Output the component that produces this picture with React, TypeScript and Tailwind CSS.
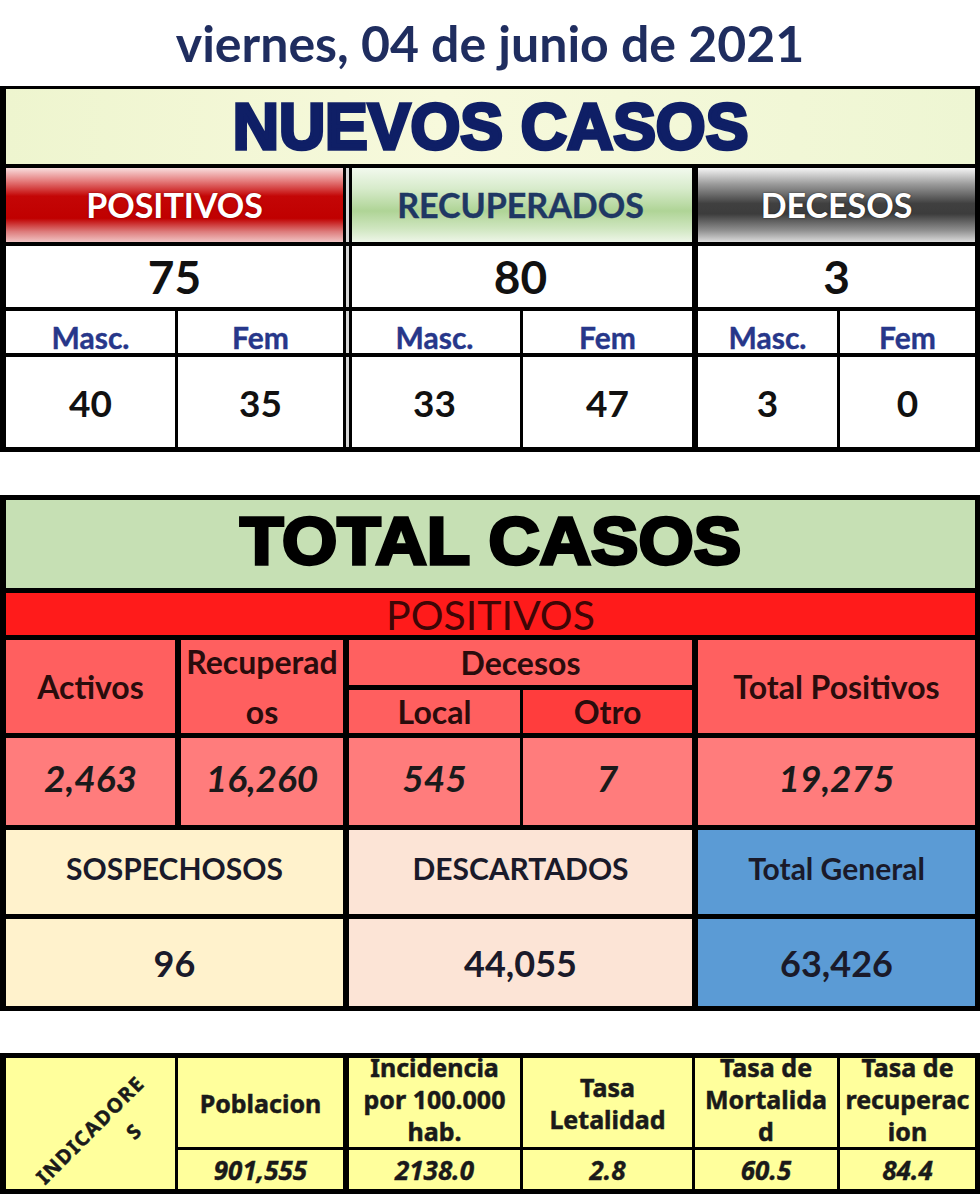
import React from "react";

const COLS = "grid-cols-[169px_165px_174px_169px_142px_135px]";
const SEP_DOUBLE = "border-l-[3px] border-l-[#d6d6d6] shadow-[inset_3px_0_0_#000]";
const SEP_THICK = "border-l-[3px] border-l-black";
const CENTER = "flex items-center justify-center text-center";

function Nuevos() {
  const num = "text-[46px] font-bold leading-none text-[#111]";
  const sub = "text-[30px] font-bold leading-none text-[#27378a] [-webkit-text-stroke:0.4px_#27378a]";
  const val = "text-[37px] font-bold leading-none text-[#111]";
  return (
    <div
      className={`grid bg-black pl-[6px] pr-[5px] pt-[3px] pb-[5px] ${COLS} grid-rows-[75px_74px_61px_42px_90px] gap-x-[3px] gap-y-[4px]`}
    >
      <div className={`col-span-6 ${CENTER} bg-[linear-gradient(90deg,#eef5cf_0%,#f7f9dc_45%,#eef6d3_100%)]`}>
        <span className="inline-block scale-y-[1.02] font-['Liberation_Sans',sans-serif] text-[64px] font-bold leading-none text-[#0f1f66] [-webkit-text-stroke:3.5px_#0f1f66]">
          NUEVOS CASOS
        </span>
      </div>

      <div className={`col-span-2 ${CENTER} bg-[linear-gradient(180deg,#f8dddd_0%,#e47a7a_18%,#c40606_38%,#c00000_68%,#dd7c7c_86%,#f1c4c4_100%)]`}>
        <span className="text-[34px] font-bold leading-none text-white [text-shadow:0_0_2px_rgba(110,0,0,0.7)]">POSITIVOS</span>
      </div>
      <div className={`col-span-2 ${CENTER} ${SEP_DOUBLE} bg-[linear-gradient(180deg,#f2f9ee_0%,#d7ebcb_28%,#afd496_58%,#cfe6c0_82%,#eef6e8_100%)]`}>
        <span className="text-[34px] font-bold leading-none text-[#1f3864] [-webkit-text-stroke:0.4px_#1f3864]">RECUPERADOS</span>
      </div>
      <div className={`col-span-2 ${CENTER} ${SEP_THICK} bg-[linear-gradient(180deg,#f4f4f4_0%,#9a9a9a_22%,#404040_48%,#3c3c3c_62%,#8e8e8e_84%,#dcdcdc_100%)]`}>
        <span className="text-[34px] font-bold leading-none text-white [text-shadow:0_0_2px_rgba(0,0,0,0.6)]">DECESOS</span>
      </div>

      <div className={`col-span-2 ${CENTER} bg-white`}><span className={num}>75</span></div>
      <div className={`col-span-2 ${CENTER} ${SEP_DOUBLE} bg-white`}><span className={num}>80</span></div>
      <div className={`col-span-2 ${CENTER} ${SEP_THICK} bg-white`}><span className={num}>3</span></div>

      <div className={`${CENTER} bg-white pt-[10px]`}><span className={sub}>Masc.</span></div>
      <div className={`${CENTER} bg-white pt-[10px]`}><span className={sub}>Fem</span></div>
      <div className={`${CENTER} ${SEP_DOUBLE} bg-white pt-[10px]`}><span className={sub}>Masc.</span></div>
      <div className={`${CENTER} bg-white pt-[10px]`}><span className={sub}>Fem</span></div>
      <div className={`${CENTER} ${SEP_THICK} bg-white pt-[10px]`}><span className={sub}>Masc.</span></div>
      <div className={`${CENTER} bg-white pt-[10px]`}><span className={sub}>Fem</span></div>

      <div className={`${CENTER} bg-white`}><span className={val}>40</span></div>
      <div className={`${CENTER} bg-white`}><span className={val}>35</span></div>
      <div className={`${CENTER} ${SEP_DOUBLE} bg-white`}><span className={val}>33</span></div>
      <div className={`${CENTER} bg-white`}><span className={val}>47</span></div>
      <div className={`${CENTER} ${SEP_THICK} bg-white`}><span className={val}>3</span></div>
      <div className={`${CENTER} bg-white`}><span className={val}>0</span></div>
    </div>
  );
}

function Total() {
  const head = "text-[32px] font-bold leading-none text-[#2a0c0c]";
  const ital = "text-[37px] font-bold italic leading-none text-[#1a1a1a]";
  const big = "text-[30px] font-bold leading-none text-[#1a1a2a]";
  const bigVal = "text-[36px] font-bold leading-none text-[#1a1a2a]";
  return (
    <div
      className={`mt-[43px] grid bg-black pl-[6px] pr-[5px] pt-[5px] pb-[5px] ${COLS} grid-rows-[88px_42px_45px_43px_87px_84px_87px] gap-x-[3px] gap-y-[5px]`}
    >
      <div className={`col-span-6 ${CENTER} bg-[#c6e0b4] pb-[8px]`}>
        <span className="inline-block scale-y-[0.95] font-['Liberation_Sans',sans-serif] text-[71px] font-bold leading-none text-black [-webkit-text-stroke:3.5px_#000]">
          TOTAL CASOS
        </span>
      </div>
      <div className={`col-span-6 ${CENTER} bg-[#ff1b1b] overflow-hidden`}>
        <span className="text-[41px] leading-none text-[#3f0606]">POSITIVOS</span>
      </div>

      <div className={`row-span-2 ${CENTER} bg-[#ff5f5f]`}><span className={head}>Activos</span></div>
      <div className={`row-span-2 flex flex-col items-center justify-center ${SEP_THICK} bg-[#ff5f5f]`}>
        <span className="text-[32px] font-bold leading-[50px] text-[#2a0c0c]">Recuperad</span>
        <span className="text-[32px] font-bold leading-[50px] text-[#2a0c0c]">os</span>
      </div>
      <div className={`col-span-2 ${CENTER} ${SEP_THICK} bg-[#ff6060]`}><span className={head}>Decesos</span></div>
      <div className={`col-span-2 row-span-2 ${CENTER} ${SEP_THICK} bg-[#ff6060]`}><span className={head}>Total Positivos</span></div>
      <div className={`${CENTER} ${SEP_THICK} bg-[#ff5f5f]`}><span className={head}>Local</span></div>
      <div className={`${CENTER} bg-[#ff3d3d]`}><span className={head}>Otro</span></div>

      <div className={`${CENTER} bg-[#ff7c7c] pb-[8px]`}><span className={ital}>2,463</span></div>
      <div className={`${CENTER} ${SEP_THICK} bg-[#ff7c7c] pb-[8px]`}><span className={ital}>16,260</span></div>
      <div className={`${CENTER} ${SEP_THICK} bg-[#ff7c7c] pb-[8px]`}><span className={ital}>545</span></div>
      <div className={`${CENTER} bg-[#ff7c7c] pb-[8px]`}><span className={ital}>7</span></div>
      <div className={`col-span-2 ${CENTER} ${SEP_THICK} bg-[#ff7c7c] pb-[8px]`}><span className={ital}>19,275</span></div>

      <div className={`col-span-2 ${CENTER} bg-[#fff2cc] pb-[8px]`}><span className={big}>SOSPECHOSOS</span></div>
      <div className={`col-span-2 ${CENTER} ${SEP_THICK} bg-[#fce4d6] pb-[8px]`}><span className={big}>DESCARTADOS</span></div>
      <div className={`col-span-2 ${CENTER} ${SEP_THICK} bg-[#5b9bd5] pb-[8px]`}><span className={big}>Total General</span></div>

      <div className={`col-span-2 ${CENTER} bg-[#fff2cc]`}><span className={bigVal}>96</span></div>
      <div className={`col-span-2 ${CENTER} ${SEP_THICK} bg-[#fce4d6]`}><span className={bigVal}>44,055</span></div>
      <div className={`col-span-2 ${CENTER} ${SEP_THICK} bg-[#5b9bd5]`}><span className={bigVal}>63,426</span></div>
    </div>
  );
}

function Indicadores() {
  const hd = "bg-[#ffff9c] overflow-hidden flex flex-col items-center justify-center text-center text-[25px] font-bold leading-[32px] text-[#1a1a1a] whitespace-nowrap [-webkit-text-stroke:0.5px_#1a1a1a]";
  const vl = "bg-[#ffff9c] overflow-hidden flex items-center justify-center text-[26px] font-bold italic leading-none text-[#1a1a1a] [-webkit-text-stroke:0.4px_#1a1a1a]";
  return (
    <div
      className={`mt-[42px] grid bg-black pl-[6px] pr-[5px] pt-[5px] pb-[5px] ${COLS} grid-rows-[89px_39px] gap-x-[3px] gap-y-[3px] font-['Noto_Sans',sans-serif]`}
    >
      <div className="row-span-2 flex items-center justify-center overflow-hidden bg-[#ffff9c]">
        <div className="relative translate-y-[6px] -rotate-45 whitespace-nowrap text-[20px] font-bold leading-none tracking-[1.5px] text-[#1a1a1a] [-webkit-text-stroke:0.5px_#1a1a1a]">
          INDICADORE
          <span className="absolute left-[calc(50%+30px)] top-[calc(50%+32px)] -translate-x-1/2 -translate-y-1/2">S</span>
        </div>
      </div>
      <div className={hd}><span>Poblacion</span></div>
      <div className={`${hd} ${SEP_THICK}`}>
        <div className="flex -translate-y-[4px] flex-col items-center">
          <span>Incidencia</span>
          <span>por 100.000</span>
          <span>hab.</span>
        </div>
      </div>
      <div className={hd}>
        <span>Tasa</span>
        <span>Letalidad</span>
      </div>
      <div className={hd}>
        <div className="flex -translate-y-[4px] flex-col items-center">
          <span>Tasa de</span>
          <span>Mortalida</span>
          <span>d</span>
        </div>
      </div>
      <div className={hd}>
        <div className="flex -translate-y-[4px] flex-col items-center">
          <span>Tasa de</span>
          <span>recuperac</span>
          <span>ion</span>
        </div>
      </div>

      <div className={vl}>901,555</div>
      <div className={`${vl} ${SEP_THICK}`}>2138.0</div>
      <div className={vl}>2.8</div>
      <div className={vl}>60.5</div>
      <div className={vl}>84.4</div>
    </div>
  );
}

export default function App() {
  return (
    <div className="w-[980px] bg-white font-['Lato',sans-serif] text-black">
      <div className="flex h-[86px] items-center justify-center">
        <span className="text-[50px] font-bold leading-none text-[#1f2d5f]">viernes, 04 de junio de 2021</span>
      </div>
      <Nuevos />
      <Total />
      <Indicadores />
    </div>
  );
}
